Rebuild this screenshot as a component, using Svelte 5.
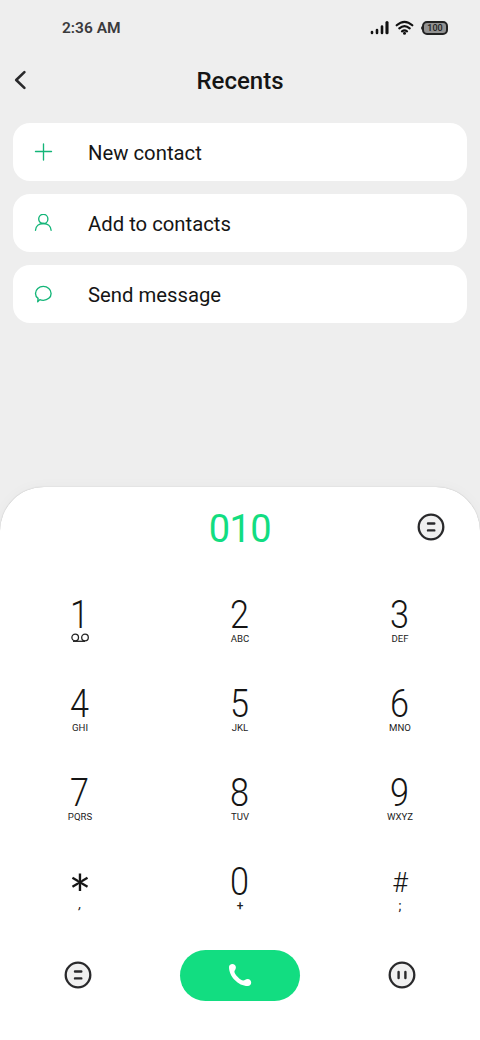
<script lang="ts">
  let dialed = '010';

  const actions = [
    { icon: 'plus', label: 'New contact' },
    { icon: 'person', label: 'Add to contacts' },
    { icon: 'message', label: 'Send message' },
  ];

  const keys = [
    { main: '1', sub: 'voicemail' },
    { main: '2', sub: 'ABC' },
    { main: '3', sub: 'DEF' },
    { main: '4', sub: 'GHI' },
    { main: '5', sub: 'JKL' },
    { main: '6', sub: 'MNO' },
    { main: '7', sub: 'PQRS' },
    { main: '8', sub: 'TUV' },
    { main: '9', sub: 'WXYZ' },
    { main: '*', sub: ',' },
    { main: '0', sub: '+' },
    { main: '#', sub: ';' },
  ];

  const press = (key: string) => {
    dialed += key;
  };
</script>

{#snippet roundIcon(kind: string)}
  <svg width="28" height="28" viewBox="0 0 28 28">
    <circle cx="14" cy="14" r="12.3" fill="#f0f0f0" stroke="#29292b" stroke-width="2.3" />
    <path
      d={kind === 'pause' ? 'M10.6 11v6M17.4 11v6' : 'M11 10.5h6.3M11 17.4h6.3'}
      stroke="#29292b"
      stroke-width="2.4"
      stroke-linecap="round"
    />
  </svg>
{/snippet}

<div class="phone">
  <div class="status">
    <span class="time">2:36 AM</span>
    <div class="indicators">
      <svg width="20" height="16" viewBox="0 0 20 16" stroke="#111" stroke-linecap="round">
        <path d="M2 13v-.9M7 13v-3M12 13V6.5" stroke-width="2.6" />
        <path d="M17 12.8V2.6" stroke-width="3.1" />
      </svg>
      <svg width="19" height="16" viewBox="0 0 19 16" fill="none" stroke="#111" stroke-width="2.2" stroke-linecap="round">
        <path d="M1.7 5.3Q9.5-1.7 17.3 5.3M4.3 8.4Q9.5 4 14.7 8.4M7 11.3Q9.5 9.3 12 11.3" />
        <circle cx="9.5" cy="13.3" r="1.5" fill="#111" stroke="none" />
      </svg>
      <div class="battery">100</div>
    </div>
  </div>

  <header>
    <button class="back" type="button" aria-label="Back">
      <svg width="14" height="20" viewBox="0 0 14 20" fill="none" stroke="#29292b" stroke-width="2.6" stroke-linecap="round" stroke-linejoin="round">
        <path d="M10.4 2.1L2.2 10l8.2 7.9" />
      </svg>
    </button>
    <h1>Recents</h1>
  </header>

  <div class="actions">
    {#each actions as action}
      <button class="action" type="button">
        <svg width="19" height="18" viewBox="0 0 19 18" fill="none" stroke="#13b578" stroke-width="1.35" stroke-linecap="round" stroke-linejoin="round">
          {#if action.icon === 'plus'}
            <path d="M9.5 1v16M1.5 8.5h16" />
          {:else if action.icon === 'person'}
            <circle cx="9.3" cy="4.9" r="4.6" />
            <path d="M1.5 16.3C1.7 12 5.1 9.5 9.3 9.5s7.6 2.5 7.8 6.8" />
          {:else}
            <path d="M4.1 13.4C2.5 12.2 1.5 10.4 1.5 8.4c0-4 3.5-7 7.8-7s7.8 3 7.8 7-3.5 6.9-7.8 6.9c-1.3 0-2.5-.2-3.5-.7L3.7 16.8z" />
          {/if}
        </svg>
        <span>{action.label}</span>
      </button>
    {/each}
  </div>

  <div class="sheet">
    <div class="display">
      <span class="number">{dialed}</span>
      <button class="round" type="button" aria-label="Options">{@render roundIcon('menu')}</button>
    </div>

    <div class="keypad">
      {#each keys as key}
        <button class="key" type="button" on:click={() => press(key.main)}>
          <span class="main" class:star={key.main === '*'} class:hash={key.main === '#'}>{key.main}</span>
          {#if key.sub === 'voicemail'}
            <svg class="voicemail" width="18" height="12" viewBox="0 0 18 12" fill="none" stroke="#222" stroke-width="1.3">
              <circle cx="4.2" cy="5.5" r="3.3" />
              <circle cx="14" cy="5.5" r="3.3" />
              <path d="M2 9.3h12" />
            </svg>
          {:else}
            <span class="sub" class:mark={key.sub.length === 1} class:tick={key.sub === ','}>{key.sub}</span>
          {/if}
        </button>
      {/each}
    </div>

    <div class="footer">
      <button class="round" type="button" aria-label="Menu">{@render roundIcon('menu')}</button>
      <button class="call" type="button" aria-label="Call">
        <svg width="24" height="24" viewBox="0 0 24 24" fill="#fff">
          <path d="M1 4C1 2.2 2.5.9 4.3.9C6.3.9 7.9 2.4 7.9 4.4C7.9 6.5 6.3 7.2 6.4 8.8C6.6 11.5 12.4 17.4 15.2 17.6C16.8 17.7 17.6 16 19.6 16C21.6 16 23.2 17.6 23.2 19.6C23.2 21.6 21.7 23 19.8 23C10.2 23 1 13.6 1 4Z" />
        </svg>
      </button>
      <button class="round" type="button" aria-label="Pause">{@render roundIcon('pause')}</button>
    </div>
  </div>
</div>

<style>
  :global(body) {
    margin: 0;
    background: #eee;
  }

  .phone {
    display: flex;
    flex-direction: column;
    width: 480px;
    height: 1040px;
    overflow: hidden;
    background: #eee;
    color: #151515;
    font-family: Roboto, sans-serif;
  }

  button {
    margin: 0;
    padding: 0;
    border: none;
    background: none;
    color: inherit;
    font: inherit;
    cursor: pointer;
  }

  svg {
    display: block;
    flex-shrink: 0;
  }

  .status {
    display: flex;
    align-items: center;
    justify-content: space-between;
    height: 56px;
    padding: 0 32px 0 62px;
    box-sizing: border-box;
  }

  .time {
    color: #3a3a3c;
    font-size: 15.5px;
    font-weight: 600;
  }

  .indicators {
    display: flex;
    align-items: center;
    gap: 5px;
  }

  .battery {
    position: relative;
    width: 26px;
    height: 14px;
    margin-left: 3px;
    box-sizing: border-box;
    border: 2px solid #222;
    border-radius: 5px;
    background: #929292;
    color: #222;
    font-size: 9px;
    font-weight: 500;
    line-height: 10px;
    text-align: center;
  }

  .battery::before {
    content: '';
    position: absolute;
    top: 3px;
    left: -3px;
    width: 2px;
    height: 4px;
    border-radius: 2px 0 0 2px;
    background: #222;
  }

  header {
    display: grid;
    grid-template-columns: 80px 1fr 80px;
    align-items: center;
    height: 50px;
  }

  .back {
    padding: 0 0 2px 14px;
    justify-self: start;
  }

  h1 {
    margin: 0;
    font-size: 24px;
    font-weight: 500;
    line-height: 30px;
    text-align: center;
  }

  .actions {
    display: flex;
    flex-direction: column;
    gap: 13px;
    padding: 17px 13px 0;
  }

  .action {
    display: flex;
    align-items: center;
    gap: 35px;
    height: 58px;
    padding: 0 21px;
    border-radius: 17px;
    background: #fff;
    font-size: 20.3px;
    text-align: left;
  }

  .action span {
    padding-top: 1px;
  }

  .sheet {
    flex: 1;
    margin-top: 164px;
    border-radius: 44px 44px 0 0;
    background: #fff;
    box-shadow: 0 0 1px rgba(0, 0, 0, 0.3), 0 0 14px rgba(0, 0, 0, 0.03);
  }

  .display {
    display: grid;
    grid-template-columns: 80px 1fr 80px;
    align-items: center;
    height: 80px;
  }

  .number {
    grid-column: 2;
    padding-top: 4px;
    color: #12dd81;
    font-size: 38px;
    letter-spacing: -0.6px;
    text-align: center;
  }

  .display .round {
    justify-self: start;
    padding-left: 17px;
  }

  .keypad {
    display: grid;
    grid-template-columns: repeat(3, 160px);
    grid-auto-rows: 89px;
    padding-top: 17px;
  }

  .key {
    display: flex;
    flex-direction: column;
    align-items: center;
    justify-content: flex-start;
    padding-top: 12px;
  }

  .main {
    height: 36px;
    font-size: 38px;
    font-weight: 300;
    line-height: 39px;
    transform: scaleX(0.9);
  }

  .star {
    font-family: Lato, sans-serif;
    font-size: 54px;
    font-weight: 400;
    line-height: 61px;
    transform: none;
  }

  .hash {
    font-size: 27px;
    line-height: 40px;
    transform: none;
  }

  .sub {
    color: #222;
    font-size: 9.6px;
    line-height: 14px;
  }

  .mark {
    font-size: 12px;
    font-weight: 500;
  }

  .tick {
    font-style: italic;
    line-height: 10px;
  }

  .footer {
    display: flex;
    align-items: center;
    justify-content: space-between;
    padding: 9.5px 64px 0;
  }

  .call {
    display: flex;
    align-items: center;
    justify-content: center;
    width: 120px;
    height: 51px;
    border-radius: 26px;
    background: #12dd81;
  }
</style>
